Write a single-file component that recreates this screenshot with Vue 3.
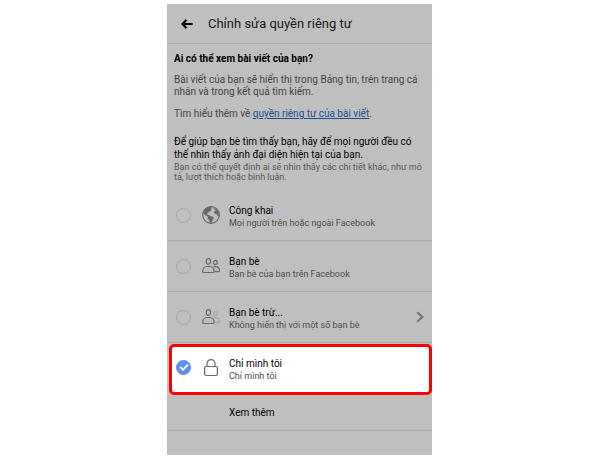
<template>
  <main class="page">
    <section class="panel">
      <header class="header">
        <button class="back" type="button" aria-label="Quay lại">
          <svg viewBox="0 0 12 10" width="12" height="10">
            <path d="M11.6 5H2M5.4 1L1.4 5l4 4" />
          </svg>
        </button>
        <h1>Chỉnh sửa quyền riêng tư</h1>
      </header>

      <div class="intro">
        <h2>Ai có thể xem bài viết của bạn?</h2>
        <p class="text">Bài viết của bạn sẽ hiển thị trong Bảng tin, trên trang cá<br />nhân và trong kết quả tìm kiếm.</p>
        <p class="text learn">Tìm hiểu thêm về <a href="#">quyền riêng tư của bài viết</a>.</p>
        <p class="hint">Để giúp bạn bè tìm thấy bạn, hãy để mọi người đều có<br />thể nhìn thấy ảnh đại diện hiện tại của bạn.</p>
        <p class="note">Bạn có thể quyết định ai sẽ nhìn thấy các chi tiết khác, như mô<br />tả, lượt thích hoặc bình luận.</p>
      </div>

      <label
        v-for="option in options"
        :key="option.id"
        class="option"
        :class="{ selected: option.id === audience }"
      >
        <input v-model="audience" type="radio" name="audience" :value="option.id" />

        <svg v-if="option.id === 'public'" class="icon" viewBox="0 0 18 18">
          <circle cx="9" cy="9" r="8.3" />
          <path class="solid" d="M1.8 4.8L5.4 1.4l3.8-.7 1 1.3-1.3 1 .9.9-1.2 1.4-1.6.4-.7 1.4-1.3.6.3 1 1.9.4 1.8 1.2 2.3.8.5 1.3-1.3 1.7-.5 1.8-1.6 1.4-.9-.8-.2-2.6-1.6-1.4.1-1.7-1.8-1.1L1.9 8 .9 7.6z" />
          <path class="solid" d="M11.4 2.2l2.6.5 2.3 2.4.9 3.4-.6 1.4-1.4-.3-.6-1.5-1.8-.3-1-1.4.8-1.5 1.2-.3-.7-1-1.5-.2z" />
        </svg>

        <svg v-else-if="option.id === 'lock'" class="icon" viewBox="0 0 18 18">
          <rect x="2.6" y="7.5" width="12.8" height="9" rx="1.4" />
          <path d="M5 7.5V4.6a4 4 0 0 1 8 0v2.9" />
        </svg>

        <svg v-else class="icon" viewBox="0 0 18 18">
          <ellipse cx="6.4" cy="4.4" rx="2.2" ry="2.8" />
          <path d="M1.7 15.5c-.7 0-1-.4-1-1 0-2.9 1.8-5 4.3-5h2.8c2.5 0 4.3 2.1 4.3 5 0 .6-.3 1-1 1z" />
          <g :class="{ faded: option.id === 'except' }">
            <ellipse cx="13.4" cy="5.4" rx="1.8" ry="2.1" />
            <path d="M11.5 9.6h2c2.3 0 4 1.8 4 4.2 0 .5-.3.8-.8.8h-4" />
          </g>
        </svg>

        <span class="words">
          <span class="name">{{ option.name }}</span>
          <span class="detail">{{ option.detail }}</span>
        </span>

        <svg v-if="option.more" class="chevron" viewBox="0 0 8 12">
          <path d="M1.2 1.2L6.4 6l-5.2 4.8" />
        </svg>
      </label>

      <button class="more" type="button">Xem thêm</button>
      <div class="rest"></div>
    </section>
  </main>
</template>

<script setup>
import { ref } from 'vue'

const audience = ref('lock')

const options = [
  { id: 'public', name: 'Công khai', detail: 'Mọi người trên hoặc ngoài Facebook' },
  { id: 'friends', name: 'Bạn bè', detail: 'Bạn bè của bạn trên Facebook' },
  { id: 'except', name: 'Bạn bè trừ...', detail: 'Không hiển thị với một số bạn bè', more: true },
  { id: 'lock', name: 'Chỉ mình tôi', detail: 'Chỉ mình tôi' },
]
</script>

<style>
body {
  margin: 0;
  background: #fff;
}
</style>

<style scoped>
.page {
  padding: 4px 168px 3px 167px;
  font-family: Roboto, 'Noto Sans', sans-serif;
}

.panel {
  background: #bfbfbf;
  color: #000;
}

.header {
  display: flex;
  align-items: center;
  height: 39px;
  padding-left: 14px;
  border-bottom: 1px solid #acacac;
}

.back {
  display: flex;
  padding: 0;
  border: 0;
  background: none;
}

.back path {
  fill: none;
  stroke: #000;
  stroke-width: 2;
}

h1,
h2,
p {
  margin: 0;
}

h1 {
  margin-left: 15px;
  font-size: 13px;
  line-height: 18px;
  font-weight: 400;
  color: #1a1a1a;
}

.intro {
  padding: 8px 7px;
}

h2 {
  font-size: 10px;
  line-height: 14px;
  font-weight: 700;
}

.text {
  margin-top: 8px;
  font-size: 10px;
  line-height: 12px;
  color: #444;
  white-space: nowrap;
}

.learn {
  margin-top: 10px;
}

.text a {
  color: #1c4c94;
}

.hint {
  margin-top: 15px;
  font-size: 10px;
  line-height: 13px;
  white-space: nowrap;
}

.note {
  margin-top: 1px;
  font-size: 9px;
  line-height: 10px;
  color: #555;
  white-space: nowrap;
}

.option {
  display: flex;
  align-items: center;
  height: 50px;
  padding-left: 9px;
  border-bottom: 1px solid #a9a9a9;
}

.option input {
  appearance: none;
  display: grid;
  place-items: center;
  box-sizing: border-box;
  width: 15px;
  height: 15px;
  margin: 0;
  border: 1px solid #a5a5a5;
  border-radius: 50%;
}

.option input:checked {
  border-color: #5890f0;
  background: #5890f0;
}

.option input:checked::after {
  content: '';
  width: 6px;
  height: 3px;
  margin-bottom: 2px;
  border-left: 2px solid #fff;
  border-bottom: 2px solid #fff;
  transform: rotate(-45deg);
}

.icon {
  width: 18px;
  height: 18px;
  margin: 0 9px 0 11px;
  fill: none;
  stroke: #66686c;
  stroke-width: 1.2;
}

.icon .solid {
  fill: #66686c;
  stroke: none;
}

.icon .faded {
  stroke: #a8a8a8;
}

.words {
  display: flex;
  flex: 1;
  flex-direction: column;
  padding-top: 4px;
  white-space: nowrap;
}

.name {
  font-size: 10px;
  line-height: 13px;
}

.detail {
  font-size: 9px;
  line-height: 13px;
  color: #4c4c4c;
}

.chevron {
  width: 8px;
  height: 12px;
  margin-right: 8px;
  fill: none;
  stroke: #74767a;
  stroke-width: 2;
}

.selected {
  height: 41px;
  margin: 1px 0 0 2px;
  padding: 0 0 4px 4px;
  border: 3px solid #fe0000;
  border-radius: 5px;
  background: #fff;
}

.more {
  display: block;
  width: 100%;
  height: 36px;
  padding: 0 0 0 62px;
  border: 0;
  border-bottom: 1px solid #a9a9a9;
  background: none;
  color: #000;
  font: 400 10px/13px Roboto, 'Noto Sans', sans-serif;
  text-align: left;
}

.rest {
  height: 24px;
}

@media (max-width: 480px) {
  .page {
    padding: 4px;
  }
}
</style>
